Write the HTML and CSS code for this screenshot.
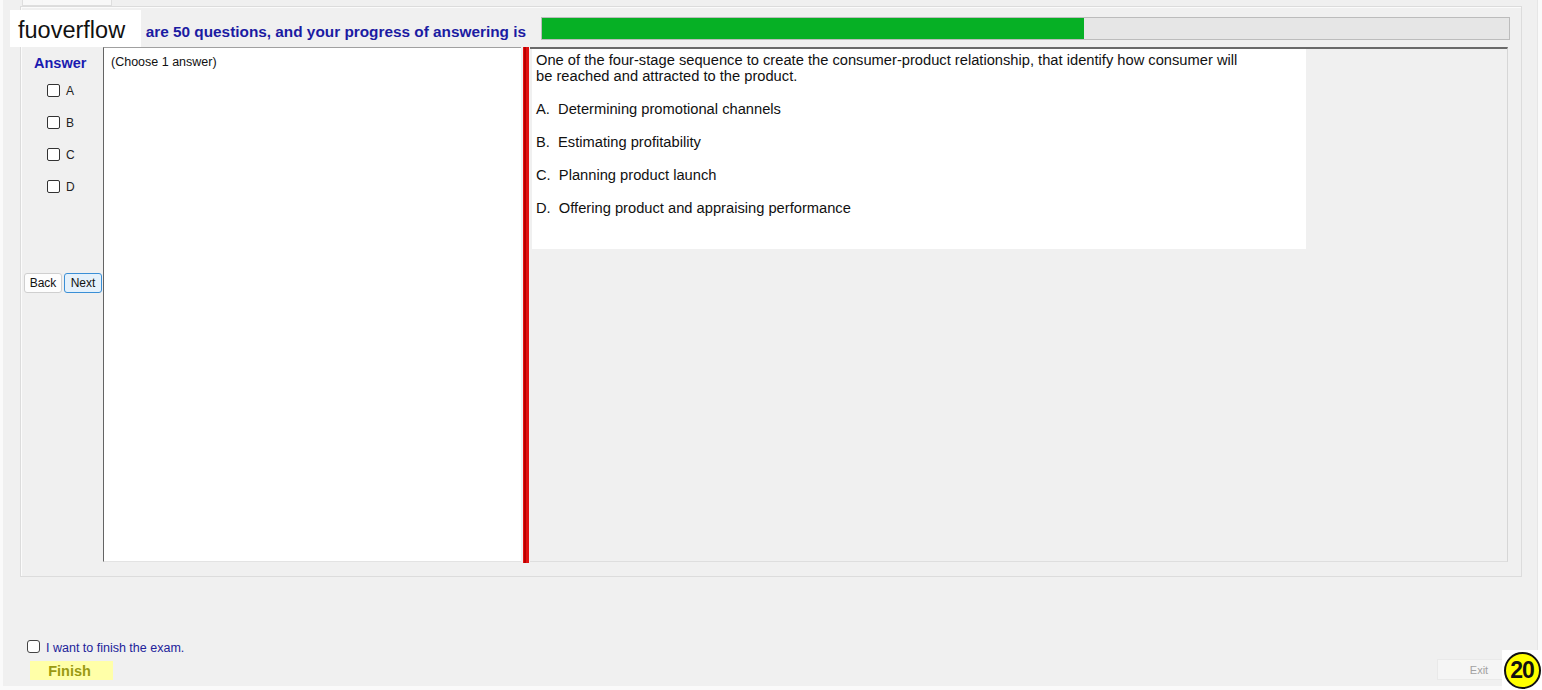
FILE: index.html
```html
<!DOCTYPE html>
<html>
<head>
<meta charset="utf-8">
<link rel="stylesheet" href="styles.css">
</head>
<body>
<div class="window">
  <div class="tabs"><div class="tab"></div></div>
  <div class="group">
    <div class="header">
      <div class="caption">are 50 questions, and your progress of answering is</div>
      <div class="progress"><div class="fill" style="width:56%"></div></div>
    </div>
    <div class="content">
      <div class="answers">
        <div class="answer-title">Answer</div>
        <div class="choices">
          <label class="choice"><span class="box"></span><span class="letter">A</span></label>
          <label class="choice"><span class="box"></span><span class="letter">B</span></label>
          <label class="choice"><span class="box"></span><span class="letter">C</span></label>
          <label class="choice"><span class="box"></span><span class="letter">D</span></label>
        </div>
        <div class="nav">
          <button class="btn">Back</button>
          <button class="btn btn-next">Next</button>
        </div>
      </div>
      <div class="notes">(Choose 1 answer)</div>
      <div class="splitter"><div class="bar"></div></div>
      <div class="question-panel">
        <div class="question">
          <p class="stem">One of the four-stage sequence to create the consumer-product relationship, that identify how consumer will<br>be reached and attracted to the product.</p>
          <p class="opt">A.  Determining promotional channels</p>
          <p class="opt">B.  Estimating profitability</p>
          <p class="opt">C.  Planning product launch</p>
          <p class="opt">D.  Offering product and appraising performance</p>
        </div>
      </div>
    </div>
  </div>
  <div class="footer">
    <label class="finish-check"><span class="box"></span><span class="finish-text">I want to finish the exam.</span></label>
    <div class="actions">
      <button class="finish">Finish</button>
      <button class="exit">Exit</button>
    </div>
  </div>
</div>
<div class="watermark">fuoverflow</div>
<div class="counter"><div class="circle">20</div></div>
</body>
</html>
```

FILE: styles.css
```css
html, body {
  margin: 0;
  padding: 0;
}
body {
  background: #fafafa;
  font-family: "Liberation Sans", Arial, sans-serif;
  position: relative;
  width: 1542px;
  height: 690px;
  overflow: hidden;
}
.window {
  margin-left: 3px;
  width: 1535px;
  height: 686px;
  background: #f0f0f0;
  box-sizing: border-box;
  border-right: 1px solid #e6e6e6;
}
.tabs {
  height: 6px;
  padding-left: 19px;
  display: flex;
}
.tab {
  width: 88px;
  height: 5px;
  background: #f8f8f8;
  border: 1px solid #dedede;
  border-top: none;
}
.group {
  margin-left: 17px;
  width: 1502px;
  height: 571px;
  box-sizing: border-box;
  border: 1px solid #dcdcdc;
  box-shadow: inset 1px 1px 0 #fbfbfb;
  padding: 10px 0 0 0;
}
.header {
  display: flex;
  height: 30px;
  align-items: flex-start;
}
.caption {
  width: 505px;
  text-align: right;
  white-space: nowrap;
  margin-top: 6px;
  line-height: 18px;
  font-size: 15.35px;
  font-weight: bold;
  color: #1b1ba2;
}
.progress {
  margin-left: 15px;
  width: 969px;
  height: 23px;
  box-sizing: border-box;
  border: 1px solid #bcbcbc;
  background: #e6e6e6;
}
.fill {
  height: 100%;
  background: #06b025;
}
.content {
  display: flex;
  height: 516px;
}
.answers {
  width: 82px;
  display: flex;
  flex-direction: column;
}
.answer-title {
  margin-top: 8px;
  margin-left: 13px;
  line-height: 17px;
  font-size: 14.5px;
  font-weight: bold;
  color: #1b1bb0;
}
.choices {
  margin-top: 12px;
  display: flex;
  flex-direction: column;
  gap: 19px;
}
.choice {
  display: flex;
  align-items: center;
  gap: 6px;
  padding-left: 26px;
  height: 13px;
}
.box {
  display: inline-block;
  width: 13px;
  height: 13px;
  box-sizing: border-box;
  border: 1px solid #333;
  border-radius: 2px;
  background: #fff;
  flex: none;
}
.letter {
  font-size: 12px;
  color: #222;
}
.nav {
  margin-top: 80px;
  padding-left: 3px;
  display: flex;
  gap: 2px;
}
.btn {
  width: 38px;
  height: 20px;
  box-sizing: border-box;
  padding: 0;
  border: 1px solid #cfcfcf;
  border-radius: 3px;
  background: #fdfdfd;
  font-family: "Liberation Sans", Arial, sans-serif;
  font-size: 12px;
  color: #111;
}
.btn-next {
  border-color: #3a8fd6;
  background: #e5f1fb;
}
.notes {
  width: 418px;
  height: 515px;
  box-sizing: border-box;
  background: #fff;
  border-top: 1px solid #a0a0a0;
  border-left: 1px solid #646464;
  border-bottom: 1px solid #e3e3e3;
  padding: 7px 0 0 7px;
  font-size: 12.5px;
  line-height: 15px;
  color: #111;
}
.splitter {
  width: 9px;
  height: 516px;
  padding-left: 2px;
  box-sizing: border-box;
}
.bar {
  width: 6px;
  height: 100%;
  background: linear-gradient(to right, #e81010 0 1px, #b80000 1px 3px, #e01010 3px 6px);
}
.question-panel {
  width: 978px;
  height: 515px;
  box-sizing: border-box;
  border-top: 2px solid #6a6a6a;
  border-right: 1px solid #d6d6d6;
  border-bottom: 1px solid #dedede;
  padding-left: 2px;
}
.question {
  width: 774px;
  height: 200px;
  background: #fff;
  box-sizing: border-box;
  padding: 3px 0 0 4px;
  font-size: 14.7px;
  line-height: 16px;
  color: #111;
}
.stem {
  margin: 0 0 17px 0;
}
.opt {
  margin: 0 0 17px 0;
  white-space: pre;
}
.footer {
  padding: 63px 0 0 0;
}
.finish-check {
  display: flex;
  align-items: flex-start;
  padding-left: 24px;
  height: 13px;
  gap: 6px;
}
.finish-check .box {
  border-color: #444;
  border-radius: 3px;
}
.finish-text {
  font-size: 12.5px;
  line-height: 15px;
  margin-top: 1px;
  color: #22229a;
}
.actions {
  margin-top: 6px;
  display: flex;
  justify-content: space-between;
  align-items: flex-end;
  padding-left: 27px;
  padding-right: 16px;
}
.finish {
  width: 83px;
  height: 19px;
  border: none;
  padding: 0;
  background: #ffffa8;
  font-family: "Liberation Sans", Arial, sans-serif;
  font-size: 14.5px;
  font-weight: bold;
  color: #9a9a12;
  text-align: center;
  padding-right: 4px;
}
.exit {
  width: 84px;
  height: 21px;
  box-sizing: border-box;
  padding: 0;
  border: 1px solid #e9e9e9;
  background: #f5f5f5;
  font-family: "Liberation Sans", Arial, sans-serif;
  font-size: 11px;
  color: #a2a2a2;
}
.watermark {
  position: absolute;
  left: 10px;
  top: 10px;
  width: 131px;
  height: 37px;
  box-sizing: border-box;
  background: #fff;
  padding: 3px 0 0 8px;
  line-height: 34px;
  font-size: 23.5px;
  color: #111;
}
.counter {
  position: absolute;
  left: 1502px;
  top: 650px;
  width: 40px;
  height: 40px;
  background: #fff;
}
.circle {
  position: absolute;
  left: 2px;
  top: 2px;
  width: 37px;
  height: 37px;
  box-sizing: border-box;
  border: 2px solid #111;
  border-radius: 50%;
  background: #ffff00;
  display: flex;
  align-items: center;
  justify-content: center;
  font-size: 23px;
  font-weight: 900;
  color: #111;
  letter-spacing: -1px;
  padding-right: 1px;
}
```
